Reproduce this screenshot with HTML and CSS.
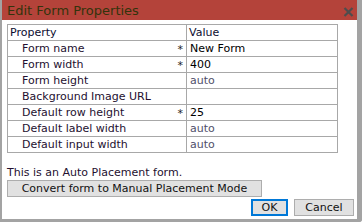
FILE: index.html
```html
<!DOCTYPE html>
<html>
<head>
<meta charset="utf-8">
<link rel="stylesheet" href="styles.css">
</head>
<body>
<div class="dialog">
  <div class="titlebar">
    <span class="title">Edit Form Properties</span>
    <svg class="close" width="11" height="10" viewBox="0 0 11 10"><path d="M1.5 1 L9.5 9 M9.5 1 L1.5 9" stroke="#4d4d4d" stroke-width="2.2" fill="none"/></svg>
  </div>
  <div class="content">
    <table class="props">
      <tr class="head"><td class="pname">Property</td><td class="pval">Value</td></tr>
      <tr><td class="pname ind req">Form name</td><td class="pval">New Form</td></tr>
      <tr><td class="pname ind req">Form width</td><td class="pval">400</td></tr>
      <tr><td class="pname ind">Form height</td><td class="pval dim">auto</td></tr>
      <tr><td class="pname ind">Background Image URL</td><td class="pval"></td></tr>
      <tr><td class="pname ind req">Default row height</td><td class="pval">25</td></tr>
      <tr><td class="pname ind">Default label width</td><td class="pval dim">auto</td></tr>
      <tr><td class="pname ind">Default input width</td><td class="pval dim">auto</td></tr>
    </table>
    <div class="note">This is an Auto Placement form.</div>
    <button class="btn convert">Convert form to Manual Placement Mode</button>
    <div class="actions">
      <button class="btn ok">OK</button>
      <button class="btn cancel">Cancel</button>
    </div>
  </div>
</div>
</body>
</html>
```
FILE: styles.css
```css
html, body {
  margin: 0;
  padding: 0;
  background: #ffffff;
}
.dialog {
  width: 355px;
  height: 219px;
  border-left: 2px solid #a3a3a3;
  border-right: 5px solid #a3a3a3;
  border-bottom: 3px solid #a3a3a3;
  border-bottom-right-radius: 3px;
  background: #ffffff;
  display: flex;
  flex-direction: column;
  font-family: "DejaVu Sans", Verdana, sans-serif;
}
.titlebar {
  height: 20px;
  background: #b4433a;
  display: flex;
  align-items: center;
  justify-content: space-between;
  padding: 0 3px 0 5px;
}
.title {
  font-size: 13px;
  color: #33330c;
  line-height: 20px;
  padding-top: 1px;
}
.close {
  display: block;
  margin-top: 4px;
}
.content {
  padding: 4px 5px 0 5px;
  display: flex;
  flex-direction: column;
}
.props {
  border-collapse: collapse;
  width: 331px;
  font-size: 11px;
  table-layout: fixed;
}
.props td {
  border: 1px solid #a8a8a8;
  height: 15px;
  padding: 0 3px;
  line-height: 15px;
  white-space: nowrap;
  overflow: hidden;
}
.props td.pname {
  width: 173px;
  color: #24102f;
  position: relative;
}
.props tr.head td {
  color: #0c0c30;
  padding-left: 2px;
}
.props td.ind {
  padding-left: 14px;
}
.props td.req::after {
  content: "*";
  position: absolute;
  right: 3px;
  top: 1px;
  color: #222;
}
.props td.pval {
  color: #000000;
}
.props td.pval.dim {
  color: #50506a;
}
.note {
  margin-top: 13px;
  font-size: 11px;
  color: #24102f;
  line-height: 13px;
}
.btn {
  font-family: "DejaVu Sans", Verdana, sans-serif;
  font-size: 11px;
  background: #e1e1e1;
  border: 1px solid #adadad;
  color: #111;
  padding: 0;
  height: 17px;
  line-height: 15px;
  margin: 0;
  box-sizing: border-box;
}
.convert {
  margin-top: 1px;
  width: 255px;
  align-self: flex-start;
}
.actions {
  display: flex;
  justify-content: flex-end;
  gap: 6px;
  margin-top: 2px;
  margin-right: -2px;
}
.ok {
  width: 37px;
  border: 2px solid #0078d7;
  line-height: 13px;
}
.cancel {
  width: 60px;
}
```
